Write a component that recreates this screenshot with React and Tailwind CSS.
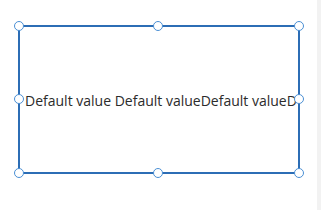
import React from 'react';

function Handle({ className }) {
  return (
    <span
      className={
        'absolute w-[10px] h-[10px] rounded-full bg-white border-[1.5px] border-[#4a8fd4] ' +
        className
      }
    />
  );
}

export default function App() {
  return (
    <div className="w-[321px] h-[210px] flex bg-white overflow-hidden">
      <div className="flex-1 pl-[18px] pt-[25px]">
        <div className="relative w-[282px] h-[149px]">
          <div className="w-full h-full border-2 border-[#2c6db5] flex items-center overflow-hidden pl-[5px]">
            <span
              className="whitespace-nowrap text-[14px] text-[#2b2b2b] leading-none pt-[2px]"
              style={{ fontFamily: '"Open Sans", "Noto Sans", sans-serif' }}
            >
              Default value Default valueDefault valueD
            </span>
          </div>
          <Handle className="-left-[4px] -top-[4px]" />
          <Handle className="left-[135px] -top-[4px]" />
          <Handle className="-right-[4px] -top-[4px]" />
          <Handle className="-left-[4px] top-[69px]" />
          <Handle className="-right-[4px] top-[69px]" />
          <Handle className="-left-[4px] -bottom-[4px]" />
          <Handle className="left-[135px] -bottom-[4px]" />
          <Handle className="-right-[4px] -bottom-[4px]" />
        </div>
      </div>
      <div className="w-[4px] bg-[#f2f2f2]" />
    </div>
  );
}
